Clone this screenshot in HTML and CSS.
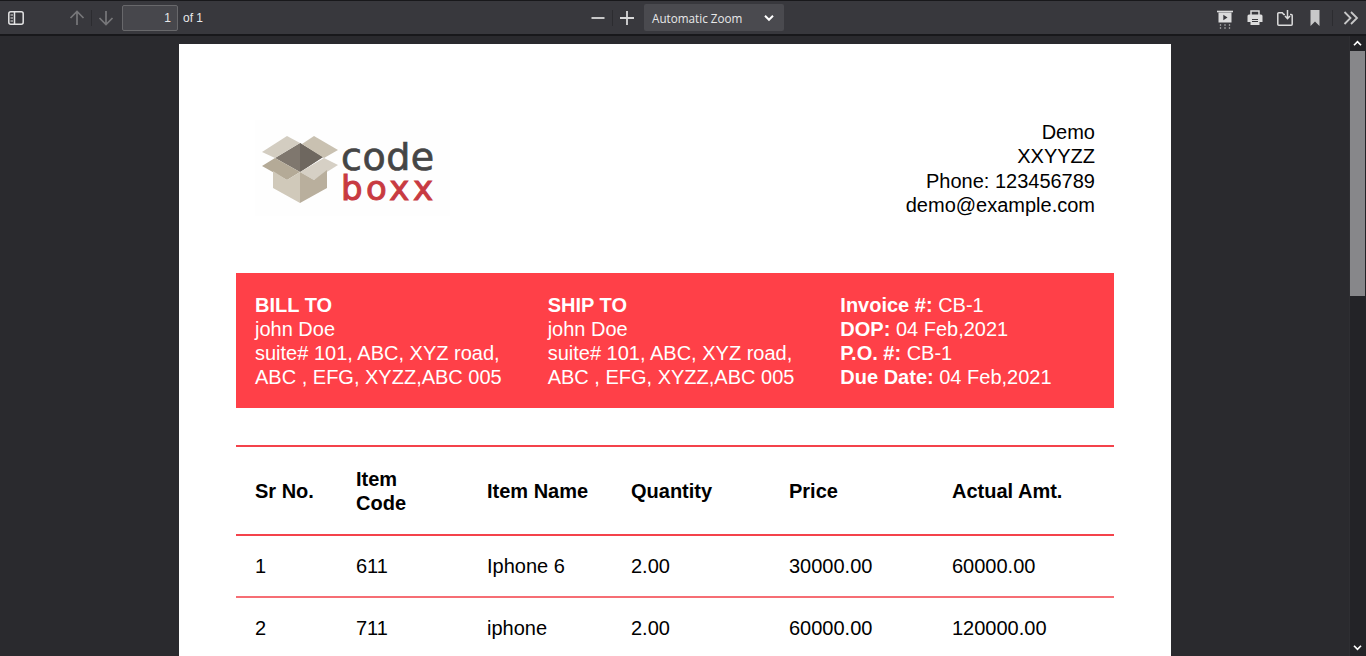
FILE: index.html
```html
<!DOCTYPE html>
<html lang="en">
<head>
    <meta charset="UTF-8">
    <meta name="viewport" content="width=device-width, initial-scale=1.0">
    <title>Invoice</title>
    <link rel="stylesheet" href="styles.css">
</head>
<body>
    <!-- viewer toolbar -->
    <div class="toolbar">
        <div class="tool-group tool-left">
            <svg class="icon sidebar-icon" viewBox="0 0 16 16"><rect x="0.8" y="1.8" width="14.4" height="12.4" rx="2" fill="none" stroke="#e3e3e4" stroke-width="1.5"/><path d="M6.5 2v12" stroke="#e3e3e4" stroke-width="1.5"/><path d="M2.5 5h2.5M2.5 8h2.5M2.5 11h2.5" stroke="#e3e3e4" stroke-width="1.2"/></svg>
            <svg class="icon up-icon" viewBox="0 0 16 16"><path d="M8 15V1.5M1.5 8L8 1.5 14.500 8" fill="none" stroke="#77777a" stroke-width="1.7"/></svg>
            <span class="sep"></span>
            <svg class="icon down-icon" viewBox="0 0 16 16"><path d="M8 1v13.500M1.500 8L8 14.500 14.500 8" fill="none" stroke="#77777a" stroke-width="1.7"/></svg>
            <div class="page-input">1</div>
            <span class="page-count">of 1</span>
        </div>
        <div class="tool-group tool-center">
            <svg class="icon minus-icon" viewBox="0 0 16 16"><path d="M1.500 8h13" stroke="#d8d8d9" stroke-width="1.800"/></svg>
            <span class="sep"></span>
            <svg class="icon plus-icon" viewBox="0 0 16 16"><path d="M1 8h14M8 1v14" stroke="#d8d8d9" stroke-width="1.800"/></svg>
            <div class="zoom-select">
                <span>Automatic Zoom</span>
                <svg class="chevron" viewBox="0 0 10 8"><path d="M1 1.800L5 5.800 9 1.800" fill="none" stroke="#fff" stroke-width="2"/></svg>
            </div>
        </div>
        <div class="tool-group tool-right">
            <svg class="icon" viewBox="0 0 16 16"><path d="M0 1.500h16" stroke="#dcdcdd" stroke-width="1.600"/><rect x="1.500" y="2.500" width="13" height="10" fill="#dcdcdd"/><path d="M6.300 4.800l4.200 2.700-4.200 2.700z" fill="#38383d"/><path d="M3.500 14v5M8 14v5M12.500 14v5" stroke="#8f8f92" stroke-width="1.300" stroke-dasharray="2 1"/></svg>
            <svg class="icon" viewBox="0 0 16 16"><path d="M4 5V1h8v4" fill="none" stroke="#dcdcdd" stroke-width="1.500"/><path d="M2 4.500h12a1.500 1.500 0 0 1 1.500 1.500v6H12.500v3h-9v-3H.5V6A1.500 1.500 0 0 1 2 4.500z" fill="#dcdcdd"/><path d="M5 9.500h6M5 11.500h6" stroke="#38383d" stroke-width="1.100"/></svg>
            <svg class="icon" viewBox="0 0 16 16"><path d="M8 4.500H6.800L5.300 2.800H1.800a1 1 0 0 0-1 1v10.400a1 1 0 0 0 1 1h12.400a1 1 0 0 0 1-1V5.500a1 1 0 0 0-1-1H13" fill="none" stroke="#dcdcdd" stroke-width="1.500"/><path d="M10.500 0v8.500M8 6l2.500 2.700L13 6" fill="none" stroke="#dcdcdd" stroke-width="1.500"/></svg>
            <svg class="icon" viewBox="0 0 16 16"><path d="M3.500 0h9v16L8 11.500 3.500 16z" fill="#c8c8c9"/></svg>
            <span class="sep sep-right"></span>
            <svg class="icon more-icon" viewBox="0 0 16 16"><path d="M1.500 2L7.500 8l-6 6M8 2l6 6-6 6" fill="none" stroke="#c8c8c9" stroke-width="1.800"/></svg>
        </div>
    </div>

    <div class="viewer">
        <div class="pane">
            <div class="page">
                <div class="head-row">
                    <svg class="logo" viewBox="15 5 195 96">
                        <rect x="15" y="5" width="195" height="96" fill="#fefefe"/>
                        <!-- box -->
                        <polygon points="35,43 60,28 83,42 60,57" fill="#7f776e"/>
                        <polygon points="60,28 83,42 60,57" fill="#6e675f"/>
                        <polygon points="22,37 47,21 60,28 35,43" fill="#d3cdc1"/>
                        <polygon points="62,29 74,21 98,35 84,43" fill="#c9c1b1"/>
                        <polygon points="35,43 60,57 47,65 22,51" fill="#b4aa97"/>
                        <polygon points="60,57 84,43 98,50 74,65" fill="#d6d0c5"/>
                        <polygon points="33,56 47,65 60,57 60,88 33,73" fill="#d0c9ba"/>
                        <polygon points="60,57 74,65 87,55 87,73 60,88" fill="#b9af9d"/>
                        <!-- wordmark -->
                        <text class="logo-code" x="101" y="55">code</text>
                        <text class="logo-boxx" x="101" y="85">boxx</text>
                    </svg>
                    <div class="company">
                        Demo<br>
                        XXYYZZ<br>
                        Phone: 123456789<br>
                        demo@example.com
                    </div>
                </div>

                <div class="info-band">
                    <div class="info-col">
                        <b>BILL TO</b><br>
                        john Doe<br>
                        suite# 101, ABC, XYZ road,<br>
                        ABC , EFG, XYZZ,ABC 005
                    </div>
                    <div class="info-col">
                        <b>SHIP TO</b><br>
                        john Doe<br>
                        suite# 101, ABC, XYZ road,<br>
                        ABC , EFG, XYZZ,ABC 005
                    </div>
                    <div class="info-col">
                        <b>Invoice #:</b> CB-1<br>
                        <b>DOP:</b> 04 Feb,2021<br>
                        <b>P.O. #:</b> CB-1<br>
                        <b>Due Date:</b> 04 Feb,2021
                    </div>
                </div>

                <table class="items">
                    <colgroup>
                        <col class="c-sr"><col class="c-code"><col class="c-name"><col class="c-qty"><col class="c-price"><col class="c-amt">
                    </colgroup>
                    <thead>
                        <tr>
                            <th>Sr No.</th>
                            <th>Item<br>Code</th>
                            <th>Item Name</th>
                            <th>Quantity</th>
                            <th>Price</th>
                            <th>Actual Amt.</th>
                        </tr>
                    </thead>
                    <tbody>
                        <tr>
                            <td>1</td><td>611</td><td>Iphone 6</td><td>2.00</td><td>30000.00</td><td>60000.00</td>
                        </tr>
                        <tr>
                            <td>2</td><td>711</td><td>iphone</td><td>2.00</td><td>60000.00</td><td>120000.00</td>
                        </tr>
                    </tbody>
                </table>
            </div>
        </div>

        <div class="scrollbar">
            <svg class="arrow" viewBox="0 0 10 8"><path d="M1 6L5 2l4 4" fill="none" stroke="#fff" stroke-width="2"/></svg>
            <div class="thumb"></div>
            <svg class="arrow arrow-down" viewBox="0 0 10 8"><path d="M1 2l4 4 4-4" fill="none" stroke="#fff" stroke-width="2"/></svg>
        </div>
    </div>
</body>
</html>
```

FILE: styles.css
```css
html, body {
    height: 100%;
}
body {
    margin: 0;
    display: flex;
    flex-direction: column;
    overflow: hidden;
    font-family: "Liberation Sans", Arial, sans-serif;
    background-color: #2a2a2e;
}

/* toolbar */
.toolbar {
    height: 33px;
    flex: none;
    display: flex;
    align-items: center;
    background-color: #38383d;
    border-top: 1px solid #18181b;
    border-bottom: 2px solid #18181b;
    color: #e8e8e9;
    font-size: 12px;
}
.tool-group {
    display: flex;
    align-items: center;
}
.tool-left {
    width: 590px;
    padding-left: 8px;
    box-sizing: border-box;
}
.tool-center {
    flex: 1;
}
.tool-right {
    padding-right: 7px;
}
.icon {
    width: 16px;
    height: 16px;
    display: block;
    overflow: visible;
}
.sidebar-icon {
    margin-right: 45px;
}
.sep {
    width: 1px;
    height: 16px;
    background-color: #2c2c30;
    margin: 0 6px;
}
.up-icon, .down-icon {
    flex: none;
}
.page-input {
    width: 56px;
    height: 26px;
    margin-left: 8px;
    padding-right: 6px;
    box-sizing: border-box;
    border: 1px solid #68686b;
    border-radius: 2px;
    background-color: #47474c;
    text-align: right;
    line-height: 24px;
    font-size: 12px;
}
.page-count {
    margin-left: 5px;
}
.plus-icon {
    margin-right: 9px;
}
.zoom-select {
    width: 140px;
    height: 27px;
    box-sizing: border-box;
    padding: 0 8px;
    display: flex;
    align-items: center;
    justify-content: space-between;
    background-color: #4a4a4f;
    font-family: "Open Sans", sans-serif;
    font-size: 11.700px;
    border-radius: 2px;
}
.chevron {
    width: 10px;
    height: 8px;
    margin-right: 2px;
}
.tool-right .icon {
    margin-left: 14px;
}
.tool-right .more-icon {
    margin-left: 10px;
}
.sep-right {
    margin: 0 0 0 9px;
}

/* document area */
.viewer {
    flex: 1;
    min-height: 0;
    display: flex;
}
.pane {
    flex: 1;
    overflow: hidden;
    padding: 8px 0 0 179px;
}
.page {
    width: 992px;
    box-sizing: border-box;
    padding: 76px 57px 40px;
    background-color: #fff;
    color: #000;
    font-size: 20px;
    line-height: 24px;
}
.head-row {
    display: flex;
    justify-content: space-between;
    padding: 0 19px;
}
.logo {
    width: 195px;
    height: 96px;
    display: block;
}
.logo-code {
    font-family: "DejaVu Sans", sans-serif;
    font-size: 38px;
    fill: #454545;
    stroke: #454545;
    stroke-width: 0.7px;
    letter-spacing: 0.5px;
}
.logo-boxx {
    font-family: "DejaVu Sans", sans-serif;
    font-size: 34px;
    fill: #c83a41;
    stroke: #c83a41;
    stroke-width: 1px;
    letter-spacing: 3.500px;
}
.company {
    height: 96px;
    line-height: 24.300px;
    text-align: right;
}
.info-band {
    margin-top: 57px;
    padding: 20px 0 19px;
    display: grid;
    grid-template-columns: repeat(3, 1fr);
    background-color: #ff4048;
    color: #fff;
}
.info-col {
    padding-left: 19px;
}

/* items table */
.items {
    width: 100%;
    margin-top: 37px;
    table-layout: fixed;
    border-collapse: separate;
    border-spacing: 0;
}
.c-sr { width: 101px; }
.c-code { width: 131px; }
.c-name { width: 144px; }
.c-qty { width: 158px; }
.c-price { width: 163px; }
.items th {
    padding: 20px 19px 19px;
    text-align: left;
    border-top: 2px solid #f4434b;
    border-bottom: 2px solid #f4434b;
}
.items td {
    padding: 18px 19px;
    border-bottom: 2px solid #f66e74;
}

/* scrollbar */
.scrollbar {
    width: 17px;
    flex: none;
    display: flex;
    flex-direction: column;
    align-items: center;
    background-color: #232327;
    box-shadow: inset 1px 0 0 #2e2e32;
}
.arrow {
    width: 9px;
    height: 7px;
    margin-top: 4px;
    flex: none;
}
.thumb {
    width: 15px;
    height: 245px;
    margin-top: 4px;
    background-color: #87878a;
}
.arrow-down {
    margin-top: auto;
    margin-bottom: 5px;
}
```
